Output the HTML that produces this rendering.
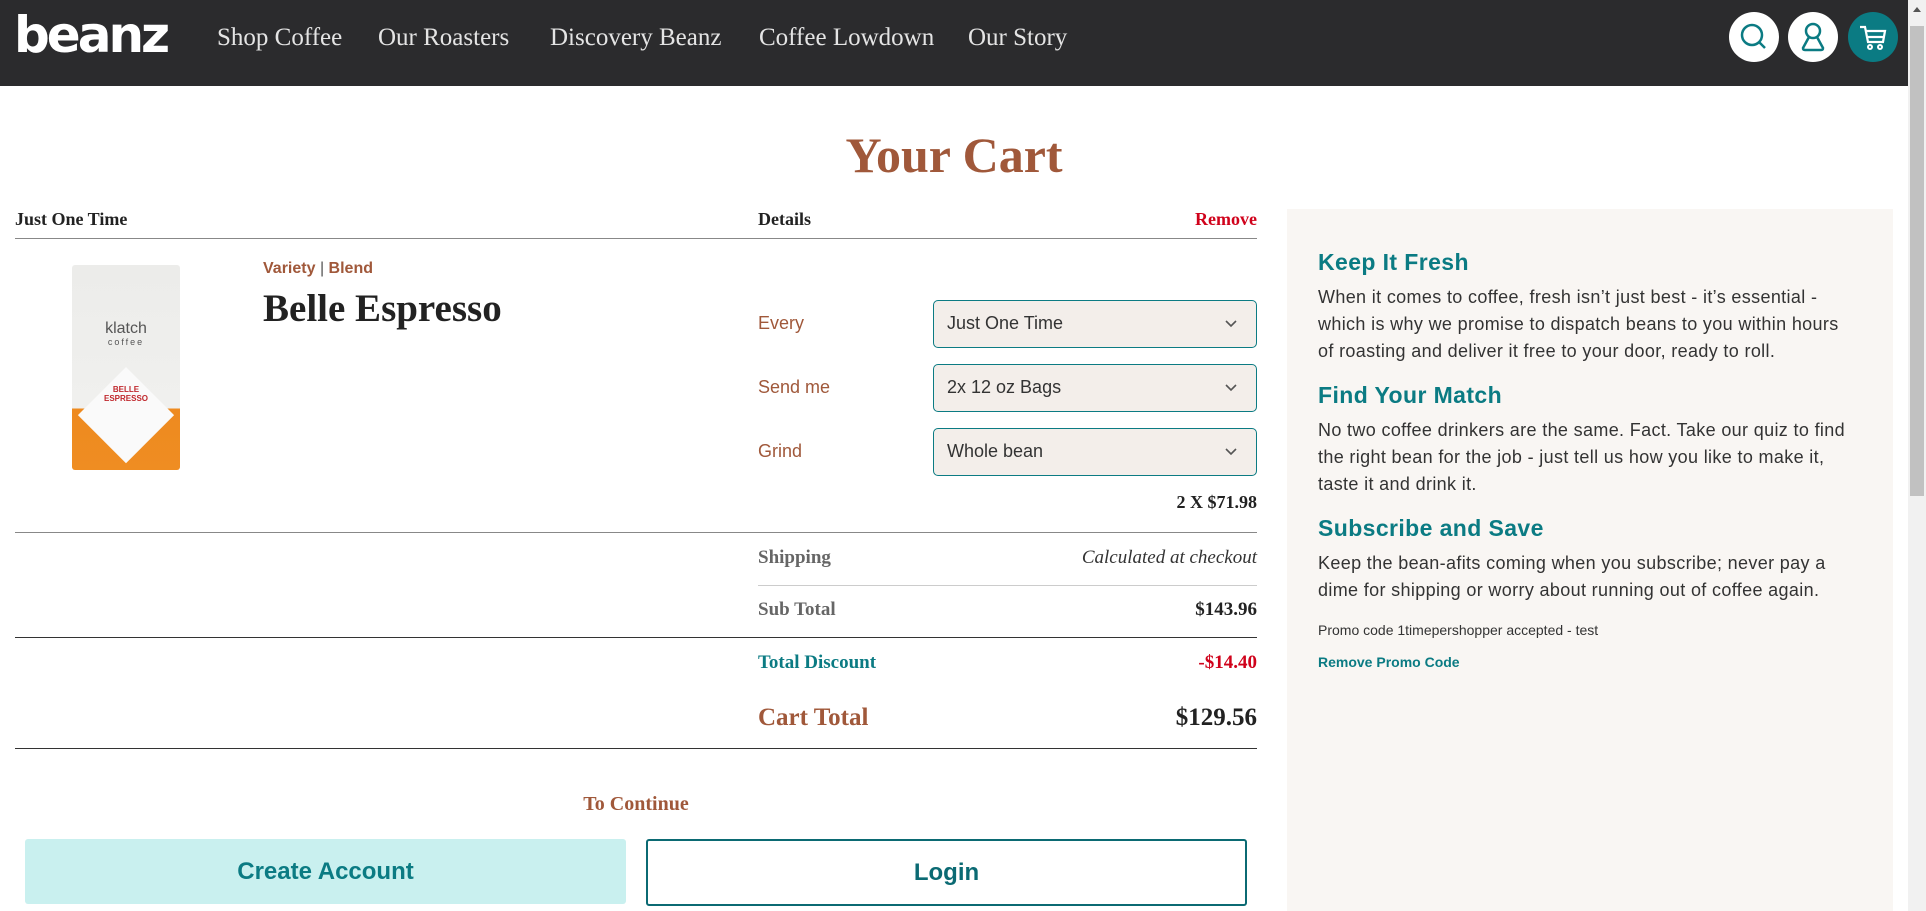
<!DOCTYPE html>
<html><head><meta charset="utf-8"><style>
*{margin:0;padding:0;box-sizing:border-box}
body{width:1926px;height:911px;overflow:hidden;background:#fff;font-family:"Liberation Sans",sans-serif;position:relative;color:#222}
.abs{position:absolute;white-space:nowrap}
.hdr{position:absolute;left:0;top:0;width:1908px;height:86px;background:#2b2b2d}
.nav{position:absolute;top:24px;font-family:"Liberation Serif",serif;font-size:25px;color:#e4e4e4}
.ic{position:absolute;top:12px;width:50px;height:50px;border-radius:50%;background:#fff}
.sb{position:absolute;right:0;top:0;width:18px;height:911px;background:#f1f1f1}
.serif{font-family:"Liberation Serif",serif}
.lbl{font-size:18px;color:#a0583a}
.sel{position:absolute;left:933px;width:324px;height:48px;border:1.5px solid #0b7b83;border-radius:5px;background:#f3eeea;font-size:18px;color:#333;padding:12px 13px}
.sel svg{position:absolute;right:18px;top:18px}
.teal{color:#0b7b83}
.rp{font-size:18px;color:#333;line-height:27px;letter-spacing:0.35px}
.rh{font-size:23px;font-weight:bold;color:#0b7b83;letter-spacing:0.4px}
</style></head><body>
<div class="hdr">
<div class="abs" style="left:14px;top:6px;font-family:'DejaVu Sans',sans-serif;font-weight:bold;font-size:50px;color:#fff;letter-spacing:-3px">beanz</div>
<div class="nav" style="left:217px">Shop Coffee</div>
<div class="nav" style="left:378px">Our Roasters</div>
<div class="nav" style="left:550px">Discovery Beanz</div>
<div class="nav" style="left:759px">Coffee Lowdown</div>
<div class="nav" style="left:968px">Our Story</div>
<div class="ic" style="left:1729px"><svg width="50" height="50"><circle cx="23" cy="23" r="10" fill="none" stroke="#0b7b83" stroke-width="2.5"/><line x1="30" y1="30" x2="36" y2="36" stroke="#0b7b83" stroke-width="2.5"/></svg></div>
<div class="ic" style="left:1788px"><svg width="50" height="50"><circle cx="25" cy="19" r="7" fill="none" stroke="#0b7b83" stroke-width="2.5"/><path d="M21 25 L15 36 Q15 38 17 38 L33 38 Q35 38 35 36 L29 25" fill="none" stroke="#0b7b83" stroke-width="2.5"/></svg></div>
<div class="ic" style="left:1848px;background:#0b7b83"><svg width="50" height="50"><path d="M12 15 L17 15 L20 30 L35 30 L37 19 L18 19 M20 25 L36 25" fill="none" stroke="#fff" stroke-width="2.2"/><circle cx="22" cy="35" r="2" fill="none" stroke="#fff" stroke-width="2"/><circle cx="32" cy="35" r="2" fill="none" stroke="#fff" stroke-width="2"/></svg></div>
</div>
<div class="sb"><div style="position:absolute;left:2px;top:26px;width:14px;height:470px;background:#c1c1c1"></div><div style="position:absolute;left:5px;top:7px;border:4px solid transparent;border-bottom:5px solid #555;border-top:0"></div></div>

<div class="abs serif" style="left:0;width:1908px;text-align:center;top:126px;font-size:50px;font-weight:bold;color:#a0583a">Your Cart</div>

<div class="abs serif" style="left:15px;top:209px;font-size:18px;font-weight:bold">Just One Time</div>
<div class="abs serif" style="left:758px;top:209px;font-size:18px;font-weight:bold">Details</div>
<div class="abs serif" style="left:1157px;top:209px;width:100px;text-align:right;font-size:18px;font-weight:bold;color:#d0021b">Remove</div>
<div class="abs" style="left:15px;top:238px;width:1242px;height:1px;background:#888"></div>

<div class="abs" style="left:72px;top:265px;width:108px;height:205px;background:linear-gradient(#ececea 0%,#f0f0ee 70%,#ee8a1f 70%,#ef8d22 100%);border-radius:3px;overflow:hidden">
<div style="position:absolute;left:20px;top:85px;width:68px;height:68px;background:#fafafa;transform:rotate(45deg) translate(22px,22px)"></div>
<div style="position:absolute;left:0;width:108px;top:55px;text-align:center;font-size:16px;color:#555">klatch</div>
<div style="position:absolute;left:0;width:108px;top:72px;text-align:center;font-size:9px;color:#555;letter-spacing:2px">coffee</div>
<div style="position:absolute;left:0;width:108px;top:120px;text-align:center;font-size:8px;font-weight:bold;color:#c0282d">BELLE<br>ESPRESSO</div>
</div>

<div class="abs" style="left:263px;top:260px;font-size:16px;font-weight:bold;color:#a0583a">Variety <span style="font-weight:normal;color:#555">|</span> Blend</div>
<div class="abs serif" style="left:263px;top:286px;font-size:39px;font-weight:bold;color:#222">Belle Espresso</div>

<div class="abs lbl" style="left:758px;top:313px">Every</div>
<div class="abs lbl" style="left:758px;top:377px">Send me</div>
<div class="abs lbl" style="left:758px;top:441px">Grind</div>
<div class="sel" style="top:300px">Just One Time<svg width="14" height="9"><path d="M2 2 L7 7 L12 2" fill="none" stroke="#555" stroke-width="1.6"/></svg></div>
<div class="sel" style="top:364px">2x 12 oz Bags<svg width="14" height="9"><path d="M2 2 L7 7 L12 2" fill="none" stroke="#555" stroke-width="1.6"/></svg></div>
<div class="sel" style="top:428px">Whole bean<svg width="14" height="9"><path d="M2 2 L7 7 L12 2" fill="none" stroke="#555" stroke-width="1.6"/></svg></div>
<div class="abs serif" style="left:1100px;width:157px;text-align:right;top:492px;font-size:18px;font-weight:bold">2 X $71.98</div>
<div class="abs" style="left:15px;top:532px;width:1242px;height:1px;background:#888"></div>

<div class="abs serif" style="left:758px;top:547px;font-size:19px;font-weight:bold;color:#666">Shipping</div>
<div class="abs serif" style="left:1000px;width:257px;text-align:right;top:547px;font-size:19px;font-style:italic;color:#333">Calculated at checkout</div>
<div class="abs" style="left:758px;top:585px;width:499px;height:1px;background:#ccc"></div>
<div class="abs serif" style="left:758px;top:599px;font-size:19px;font-weight:bold;color:#666">Sub Total</div>
<div class="abs serif" style="left:1100px;width:157px;text-align:right;top:599px;font-size:19px;font-weight:bold">$143.96</div>
<div class="abs" style="left:15px;top:637px;width:1242px;height:1px;background:#333"></div>
<div class="abs serif teal" style="left:758px;top:652px;font-size:19px;font-weight:bold">Total Discount</div>
<div class="abs serif" style="left:1100px;width:157px;text-align:right;top:652px;font-size:19px;font-weight:bold;color:#d0021b">-$14.40</div>
<div class="abs serif" style="left:758px;top:704px;font-size:25px;font-weight:bold;color:#a0583a">Cart Total</div>
<div class="abs serif" style="left:1100px;width:157px;text-align:right;top:704px;font-size:25px;font-weight:bold">$129.56</div>
<div class="abs" style="left:15px;top:748px;width:1242px;height:1px;background:#333"></div>

<div class="abs serif" style="left:536px;width:200px;text-align:center;top:793px;font-size:20px;font-weight:bold;color:#a0583a">To Continue</div>
<div class="abs" style="left:25px;top:839px;width:601px;height:65px;background:#c9f0ef;border-radius:3px;text-align:center;line-height:65px;font-size:24px;font-weight:bold;color:#0b7b83">Create Account</div>
<div class="abs" style="left:646px;top:839px;width:601px;height:67px;border:2px solid #0b6a73;border-radius:3px;text-align:center;line-height:63px;font-size:24px;font-weight:bold;color:#0b6a73">Login</div>

<div class="abs" style="left:1287px;top:209px;width:606px;height:702px;background:#f9f6f3"></div>
<div class="abs rh" style="left:1318px;top:249px">Keep It Fresh</div>
<div class="abs rp" style="left:1318px;top:284px">When it comes to coffee, fresh isn’t just best - it’s essential -<br>which is why we promise to dispatch beans to you within hours<br>of roasting and deliver it free to your door, ready to roll.</div>
<div class="abs rh" style="left:1318px;top:382px">Find Your Match</div>
<div class="abs rp" style="left:1318px;top:417px">No two coffee drinkers are the same. Fact. Take our quiz to find<br>the right bean for the job - just tell us how you like to make it,<br>taste it and drink it.</div>
<div class="abs rh" style="left:1318px;top:515px">Subscribe and Save</div>
<div class="abs rp" style="left:1318px;top:550px">Keep the bean-afits coming when you subscribe; never pay a<br>dime for shipping or worry about running out of coffee again.</div>
<div class="abs" style="left:1318px;top:622px;font-size:14px;color:#333">Promo code 1timepershopper accepted - test</div>
<div class="abs teal" style="left:1318px;top:654px;font-size:14px;font-weight:bold">Remove Promo Code</div>
</body></html>
